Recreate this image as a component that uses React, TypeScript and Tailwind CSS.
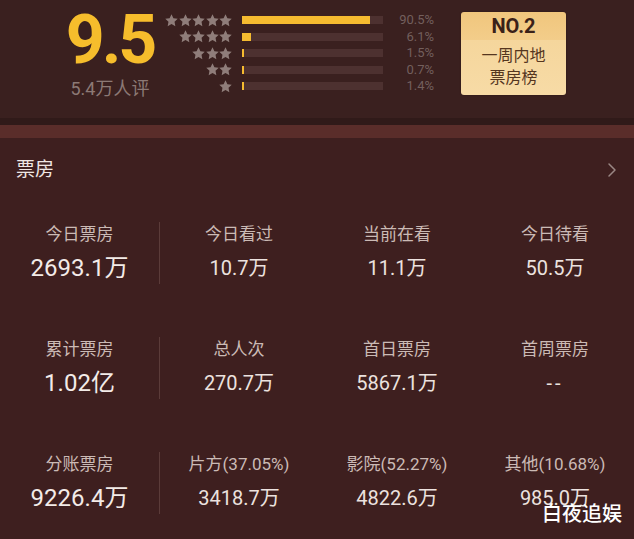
import { ChevronRight } from "lucide-react";

const font = { fontFamily: 'Roboto, "Noto Sans CJK SC", sans-serif' };

const ratings = [
  { stars: 5, pct: 90.5, label: "90.5%" },
  { stars: 4, pct: 6.1, label: "6.1%" },
  { stars: 3, pct: 1.5, label: "1.5%" },
  { stars: 2, pct: 0.7, label: "0.7%" },
  { stars: 1, pct: 1.4, label: "1.4%" },
];

const rows = [
  [
    { label: "今日票房", value: "2693.1万" },
    { label: "今日看过", value: "10.7万" },
    { label: "当前在看", value: "11.1万" },
    { label: "今日待看", value: "50.5万" },
  ],
  [
    { label: "累计票房", value: "1.02亿" },
    { label: "总人次", value: "270.7万" },
    { label: "首日票房", value: "5867.1万" },
    { label: "首周票房", value: "--" },
  ],
  [
    { label: "分账票房", value: "9226.4万" },
    { label: "片方(37.05%)", value: "3418.7万" },
    { label: "影院(52.27%)", value: "4822.6万" },
    { label: "其他(10.68%)", value: "985.0万" },
  ],
];

function Star() {
  return (
    <svg width="13" height="13" viewBox="0 0 24 24">
      <path
        d="M12 0.5l3.5 7.4 8 1-5.9 5.5 1.5 8L12 18.5l-7.1 3.9 1.5-8L0.5 8.9l8-1z"
        fill="#8f7d7a"
      />
    </svg>
  );
}

function Cell({ label, value, big }: { label: string; value: string; big?: boolean }) {
  return (
    <div className="flex flex-col items-center pt-[21px]">
      <div className="text-[17px] leading-[22px] text-[#cbbab5]">{label}</div>
      <div
        className={
          big
            ? "mt-[7px] text-[24px] leading-[32px] text-[#f3ebe8]"
            : value === "--"
              ? "mt-[8px] text-[20px] leading-[30px] text-[#ece2df] tracking-[3px]"
              : "mt-[8px] text-[20px] leading-[30px] text-[#ece2df]"
        }
      >
        {value}
      </div>
    </div>
  );
}

export default function App() {
  return (
    <div className="relative w-[634px] h-[539px] overflow-hidden bg-[#3e1f1f]" style={font}>
      <div className="h-[118px] bg-[#3a201f] flex pl-[66px]">
        <div className="w-[88px] flex flex-col items-center">
          <div className="text-[68px] leading-[68px] mt-[6px] font-bold tracking-[-3px] text-[#f6bd2c]">
            9.5
          </div>
          <div className="mt-[5px] text-[18px] leading-[20px] text-[#8c7975]">5.4万人评</div>
        </div>
        <div className="ml-[11px] mt-[12px] flex flex-col">
          {ratings.map((r) => (
            <div key={r.stars} className="h-[16.5px] flex items-center">
              <div className="w-[67px] flex justify-end gap-[0.5px]">
                {Array.from({ length: r.stars }).map((_, i) => (
                  <Star key={i} />
                ))}
              </div>
              <div className="ml-[10px] w-[141px] h-[8px] bg-[#4d3130] flex">
                <div
                  className="h-full bg-[#f5bb30] min-w-[2px]"
                  style={{ width: `${r.pct}%` }}
                />
              </div>
              <div className="w-[51px] text-right text-[13px] leading-[16px] text-[#735f5d]">
                {r.label}
              </div>
            </div>
          ))}
        </div>
        <div className="ml-[27px] mt-[12px] w-[105px] h-[83px] rounded-[3px] overflow-hidden flex flex-col shadow-[0_0_2px_rgba(0,0,0,0.3)]">
          <div className="h-[28px] bg-gradient-to-b from-[#f0c67d] to-[#f3cd8a] flex items-center justify-center text-[20px] font-bold text-[#3a2118]">
            NO.2
          </div>
          <div className="flex-1 bg-gradient-to-b from-[#f5d69c] to-[#f7dba6] flex flex-col items-center justify-center text-[16px] leading-[22px] text-[#55361f] pb-[2px]">
            <div>一周内地</div>
            <div>票房榜</div>
          </div>
        </div>
      </div>
      <div className="h-[7px] bg-[#301a19]" />
      <div className="h-[13px] bg-[#5a2d2a]" />
      <div className="h-[64px] flex items-center justify-between pl-[16px] pr-[10px]">
        <div className="text-[19px] text-[#efe7e4]">票房</div>
        <ChevronRight size={24} strokeWidth={1.5} color="#9a8784" />
      </div>
      {rows.map((row, ri) => (
        <div key={ri} className="h-[115px] flex items-start">
          <div className="w-[159px]">
            <Cell label={row[0].label} value={row[0].value} big />
          </div>
          <div className="w-px h-[62px] mt-[20px] bg-[#5b3b39]" />
          {row.slice(1).map((c) => (
            <div key={c.label} className="flex-1">
              <Cell label={c.label} value={c.value} />
            </div>
          ))}
        </div>
      ))}
      <div className="absolute right-[12px] bottom-[13px] text-[20px] leading-[24px] font-medium text-white">
        白夜追娱
      </div>
    </div>
  );
}
